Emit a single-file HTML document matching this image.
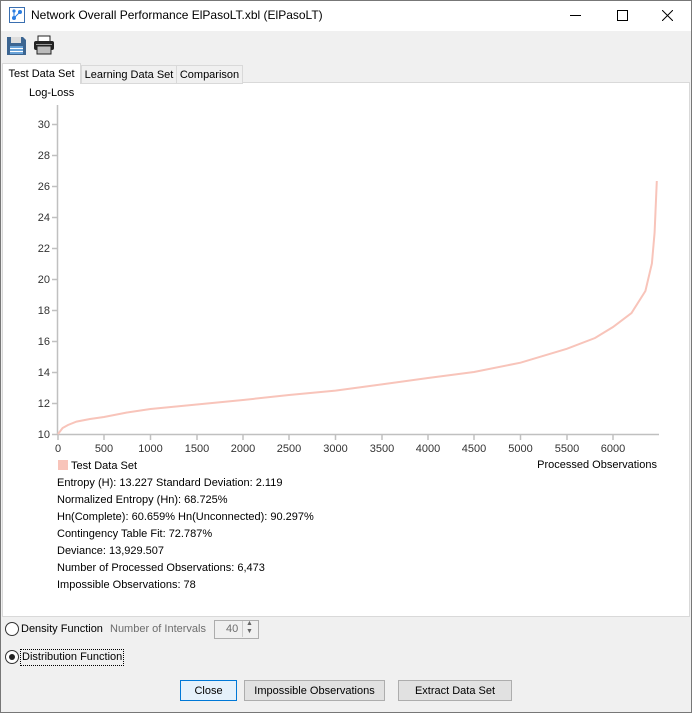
<!DOCTYPE html>
<html><head><style>
body{margin:0;width:692px;height:713px;overflow:hidden;background:#f0f0f0;font-family:"Liberation Sans",Arial,sans-serif;font-size:11px;color:#000;position:relative}
.a{position:absolute}
.btn{position:absolute;top:680px;height:19px;border:1px solid #adadad;background:#e1e1e1;font-size:11px;text-align:center;line-height:20px;box-sizing:content-box}
.st{position:absolute;left:57px;font-size:11px;color:#000}
</style></head><body>
<div class="a" style="left:0;top:0;width:692px;height:31px;background:#fff"></div>
<svg class="a" style="left:9px;top:7px" width="16" height="16"><rect x="0.5" y="0.5" width="15" height="15" fill="#fff" stroke="#3a6fb0"/><circle cx="5" cy="11" r="2" fill="#2a7de1"/><circle cx="11" cy="5" r="2" fill="#2a7de1"/><circle cx="5" cy="4" r="1.6" fill="#2a7de1"/><path d="M5 11L11 5M5 4V11" stroke="#2a7de1"/></svg>
<div class="a" style="left:31px;top:8px;font-size:12px">Network Overall Performance ElPasoLT.xbl (ElPasoLT)</div>
<div class="a" style="left:570px;top:15px;width:11px;height:1px;background:#000"></div>
<div class="a" style="left:617px;top:10px;width:9px;height:9px;border:1px solid #000"></div>
<svg class="a" style="left:662px;top:10px" width="11" height="11"><path d="M0 0L11 11M11 0L0 11" stroke="#000"/></svg>
<svg class="a" style="left:6px;top:35px" width="21" height="21"><path d="M1 2h16l3 3v15H1z" fill="#3c6591"/><rect x="5" y="2" width="10" height="6" fill="#ddd"/><rect x="4" y="11" width="13" height="8" fill="#6aa3d8"/><rect x="4" y="13" width="13" height="1" fill="#fff"/><rect x="4" y="16" width="13" height="1" fill="#fff"/></svg>
<svg class="a" style="left:33px;top:35px" width="22" height="20"><rect x="5" y="1" width="12" height="6" fill="#fff" stroke="#222"/><rect x="1" y="6" width="20" height="9" rx="2" fill="#222"/><rect x="4" y="11" width="14" height="8" fill="#bbb" stroke="#222"/><rect x="3" y="9" width="16" height="1" fill="#999"/></svg>
<div class="a" style="left:2px;top:82px;width:686px;height:533px;background:#fff;border:1px solid #d9d9d9"></div>
<div class="a" style="left:2px;top:63px;width:77px;height:20px;background:#fff;border:1px solid #d9d9d9;border-bottom:none;line-height:20px;text-align:center">Test Data Set</div>
<div class="a" style="left:81px;top:65px;width:94px;height:17px;background:#f0f0f0;border:1px solid #d9d9d9;line-height:18px;text-align:center">Learning Data Set</div>
<div class="a" style="left:176px;top:65px;width:65px;height:17px;background:#f0f0f0;border:1px solid #d9d9d9;line-height:18px;text-align:center">Comparison</div>
<div class="a" style="left:29px;top:87px">Log-Loss</div>
<svg class="a" style="left:0;top:0" width="692" height="480" font-family="Liberation Sans,Arial,sans-serif" font-size="11" fill="#333">
<g stroke="#c0c0c0" stroke-width="1.5">
<line x1="57.5" y1="105" x2="57.5" y2="435"/><line x1="57" y1="434.5" x2="659" y2="434.5"/>
<path d="M52 434.5h5M52 403.5h5M52 372.5h5M52 341.5h5M52 310.5h5M52 279.5h5M52 248.5h5M52 217.5h5M52 186.5h5M52 155.5h5M52 124.5h5"/>
<path d="M58 435v5M104 435v5M150.5 435v5M197 435v5M243 435v5M289 435v5M335.5 435v5M382 435v5M428 435v5M474 435v5M520.5 435v5M567 435v5M613 435v5"/>
</g>
<g text-anchor="end"><text x="50" y="438">10</text><text x="50" y="407">12</text><text x="50" y="376">14</text><text x="50" y="345">16</text><text x="50" y="314">18</text><text x="50" y="283">20</text><text x="50" y="252">22</text><text x="50" y="221">24</text><text x="50" y="190">26</text><text x="50" y="159">28</text><text x="50" y="128">30</text></g>
<g text-anchor="middle"><text x="58" y="452">0</text><text x="104" y="452">500</text><text x="150.5" y="452">1000</text><text x="197" y="452">1500</text><text x="243" y="452">2000</text><text x="289" y="452">2500</text><text x="335.5" y="452">3000</text><text x="382" y="452">3500</text><text x="428" y="452">4000</text><text x="474" y="452">4500</text><text x="520.5" y="452">5000</text><text x="567" y="452">5500</text><text x="613" y="452">6000</text></g>
<path d="M58 434L62.6 428L68 425L76.5 421.6L90 419L104 417L127 412.5L150.5 409L196.8 404.5L243 400L289 395L335.5 390.6L381.8 384.4L428 378L474 372L520.5 362.7L566.8 348.8L595 338L613 327L631.5 313L645.4 291L651.9 263.5L654.6 232.5L656.8 181" fill="none" stroke="#f8c4ba" stroke-width="2"/>
<text x="657" y="468" text-anchor="end" fill="#000">Processed Observations</text>
<rect x="58" y="460" width="10" height="10" fill="#f8c4ba"/>
<text x="71" y="469" fill="#000">Test Data Set</text>
</svg>
<div class="st" style="top:477px">Entropy (H): 13.227 Standard Deviation: 2.119</div>
<div class="st" style="top:494px">Normalized Entropy (Hn): 68.725%</div>
<div class="st" style="top:511px">Hn(Complete): 60.659% Hn(Unconnected): 90.297%</div>
<div class="st" style="top:528px">Contingency Table Fit: 72.787%</div>
<div class="st" style="top:545px">Deviance: 13,929.507</div>
<div class="st" style="top:562px">Number of Processed Observations: 6,473</div>
<div class="st" style="top:579px">Impossible Observations: 78</div>
<div class="a" style="left:5px;top:622px;width:12px;height:12px;border:1px solid #333;border-radius:50%;background:#fff"></div>
<div class="a" style="left:21px;top:623px">Density Function</div>
<div class="a" style="left:110px;top:623px;color:#6d6d6d">Number of Intervals</div>
<div class="a" style="left:214px;top:620px;width:43px;height:17px;border:1px solid #adadad;background:#f0f0f0"></div>
<div class="a" style="left:226px;top:623px;color:#6d6d6d">40</div>
<div class="a" style="left:242px;top:621px;width:1px;height:16px;background:#ccc"></div>
<div class="a" style="left:246px;top:620px;font-size:7px;color:#666;line-height:8px">▲<br>▼</div>
<div class="a" style="left:5px;top:650px;width:12px;height:12px;border:1px solid #333;border-radius:50%;background:#fff"></div>
<div class="a" style="left:9px;top:654px;width:6px;height:6px;border-radius:50%;background:#222"></div>
<div class="a" style="left:20px;top:649px;border:1px dotted #000;padding:0 1px;line-height:15px">Distribution Function</div>
<div class="btn" style="left:180px;width:55px;border-color:#0078d7;background:#e5f1fb">Close</div>
<div class="btn" style="left:244px;width:139px">Impossible Observations</div>
<div class="btn" style="left:398px;width:112px">Extract Data Set</div>
<div class="a" style="left:0;top:0;width:690px;height:711px;border:1px solid #777;pointer-events:none"></div>
</body></html>
